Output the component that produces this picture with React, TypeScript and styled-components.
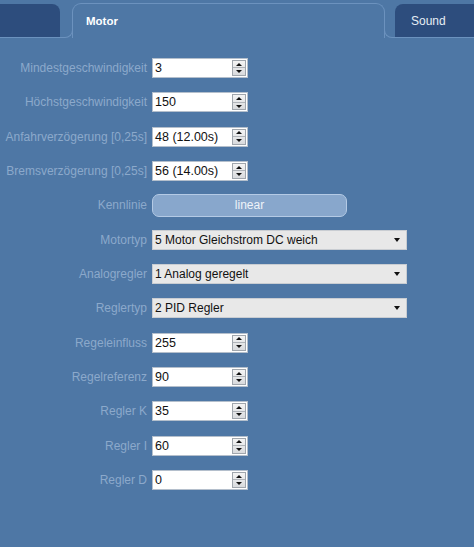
import React from "react";
import styled, { createGlobalStyle } from "styled-components";

const Global = createGlobalStyle`
  html, body { margin: 0; padding: 0; background: #4e77a5; }
  body { font-family: "Liberation Sans", Arial, sans-serif; }
  #root { min-height: 547px; }
`;

const Page = styled.div`
  width: 474px;
  min-height: 547px;
  background: #4e77a5;
  overflow: hidden;
`;

const TabBar = styled.div`
  display: flex;
  align-items: flex-end;
  height: 38px;
`;

const InactiveTab = styled.div<{ $side: "left" | "right" }>`
  box-sizing: border-box;
  height: 34px;
  width: ${(p) => (p.$side === "left" ? "60px" : "auto")};
  flex: ${(p) => (p.$side === "left" ? "0 0 auto" : "1 1 auto")};
  background: #2d4d7d;
  border-bottom: 1px solid #6c92be;
  border-radius: ${(p) => (p.$side === "left" ? "0 8px 0 0" : "8px 0 0 0")};
  color: #e6edf5;
  font-size: 12px;
  display: flex;
  align-items: center;
  padding-left: 16px;
`;

const Flare = styled.div<{ $side: "left" | "right" }>`
  box-sizing: border-box;
  width: ${(p) => (p.$side === "left" ? "13px" : "11px")};
  height: 9px;
  border-bottom: 1px solid #6c92be;
  ${(p) =>
    p.$side === "left"
      ? "border-right: 1px solid #6c92be; border-bottom-right-radius: 8px; margin-right: -1px;"
      : "border-left: 1px solid #6c92be; border-bottom-left-radius: 8px; margin-left: -1px;"}
`;

const ActiveTab = styled.div`
  box-sizing: border-box;
  width: 313px;
  height: 35px;
  border: 1px solid #6c92be;
  border-bottom: none;
  border-radius: 9px 9px 0 0;
  color: #ffffff;
  font-size: 11.5px;
  font-weight: bold;
  display: flex;
  align-items: center;
  padding-left: 13px;
  padding-bottom: 1px;
`;

const Form = styled.div`
  display: grid;
  grid-template-columns: 147px 1fr;
  column-gap: 5px;
  grid-auto-rows: 34.33px;
  align-items: center;
  padding-top: 12.8px;
`;

const Label = styled.div`
  text-align: right;
  white-space: nowrap;
  color: #8ca9cb;
  font-size: 12px;
`;

const NumberBox = styled.div`
  box-sizing: border-box;
  width: 96px;
  height: 20px;
  background: #ffffff;
  border: 1px solid #b4bfcc;
  display: flex;
  align-items: center;
  padding-left: 2px;
  padding-right: 1px;
`;

const NumberText = styled.span`
  flex: 1;
  color: #111;
  font-size: 12.5px;
`;

const Spinner = styled.div`
  box-sizing: border-box;
  width: 14px;
  height: 16px;
  border: 1px solid #a0a6ad;
  background: linear-gradient(#f4f4f4, #d9dbde);
  display: flex;
  flex-direction: column;
`;

const SpinHalf = styled.div<{ $dir: "up" | "down" }>`
  flex: 1;
  display: flex;
  align-items: center;
  justify-content: center;
  ${(p) => (p.$dir === "up" ? "border-bottom: 1px solid #b0b4b9;" : "")}
  &::after {
    content: "";
    width: 0;
    height: 0;
    border-left: 3px solid transparent;
    border-right: 3px solid transparent;
    ${(p) =>
      p.$dir === "up"
        ? "border-bottom: 3px solid #111;"
        : "border-top: 3px solid #111;"}
  }
`;

const ToggleButton = styled.div`
  box-sizing: border-box;
  width: 195px;
  height: 23px;
  background: #88a7cc;
  border: 1px solid #b4cae5;
  border-radius: 7px;
  color: #eef3f9;
  font-size: 12px;
  display: flex;
  align-items: center;
  justify-content: center;
`;

const SelectBox = styled.div`
  box-sizing: border-box;
  width: 255px;
  height: 20px;
  background: #e8e8e8;
  border: 1px solid #c9cdd2;
  display: flex;
  align-items: center;
  padding-left: 2px;
  padding-right: 6px;
  color: #111;
  font-size: 12px;
`;

const SelectText = styled.span`
  flex: 1;
`;

const Arrow = styled.span`
  width: 0;
  height: 0;
  border-left: 3.5px solid transparent;
  border-right: 3.5px solid transparent;
  border-top: 4px solid #111;
`;

type Row =
  | { kind: "num"; label: string; value: string }
  | { kind: "toggle"; label: string; value: string }
  | { kind: "select"; label: string; value: string };

const rows: Row[] = [
  { kind: "num", label: "Mindestgeschwindigkeit", value: "3" },
  { kind: "num", label: "Höchstgeschwindigkeit", value: "150" },
  { kind: "num", label: "Anfahrverzögerung [0,25s]", value: "48 (12.00s)" },
  { kind: "num", label: "Bremsverzögerung [0,25s]", value: "56 (14.00s)" },
  { kind: "toggle", label: "Kennlinie", value: "linear" },
  { kind: "select", label: "Motortyp", value: "5 Motor Gleichstrom DC weich" },
  { kind: "select", label: "Analogregler", value: "1 Analog geregelt" },
  { kind: "select", label: "Reglertyp", value: "2 PID Regler" },
  { kind: "num", label: "Regeleinfluss", value: "255" },
  { kind: "num", label: "Regelreferenz", value: "90" },
  { kind: "num", label: "Regler K", value: "35" },
  { kind: "num", label: "Regler I", value: "60" },
  { kind: "num", label: "Regler D", value: "0" },
];

function Control({ row }: { row: Row }) {
  if (row.kind === "num") {
    return (
      <NumberBox>
        <NumberText>{row.value}</NumberText>
        <Spinner>
          <SpinHalf $dir="up" />
          <SpinHalf $dir="down" />
        </Spinner>
      </NumberBox>
    );
  }
  if (row.kind === "toggle") {
    return <ToggleButton>{row.value}</ToggleButton>;
  }
  return (
    <SelectBox>
      <SelectText>{row.value}</SelectText>
      <Arrow />
    </SelectBox>
  );
}

export default function App() {
  return (
    <Page>
      <Global />
      <TabBar>
        <InactiveTab $side="left" />
        <Flare $side="left" />
        <ActiveTab>Motor</ActiveTab>
        <Flare $side="right" />
        <InactiveTab $side="right">Sound</InactiveTab>
      </TabBar>
      <Form>
        {rows.map((r) => (
          <React.Fragment key={r.label}>
            <Label>{r.label}</Label>
            <div>
              <Control row={r} />
            </div>
          </React.Fragment>
        ))}
      </Form>
    </Page>
  );
}
